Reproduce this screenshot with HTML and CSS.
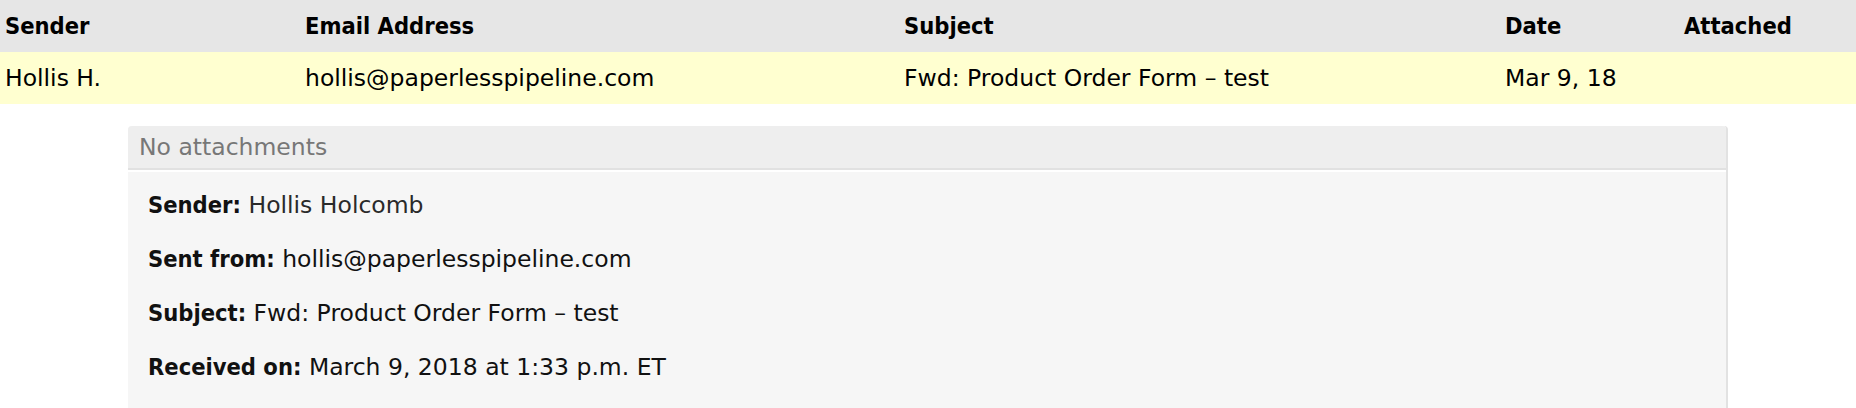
FILE: index.html
```html
<!DOCTYPE html>
<html lang="en">
<head>
<meta charset="utf-8">
<title>Email</title>
<link rel="stylesheet" href="styles.css">
</head>
<body>
<div class="mail-table">
  <div class="row head">
    <div class="cell">Sender</div>
    <div class="cell">Email Address</div>
    <div class="cell">Subject</div>
    <div class="cell">Date</div>
    <div class="cell">Attached</div>
  </div>
  <div class="row item">
    <div class="cell">Hollis H.</div>
    <div class="cell">hollis@paperlesspipeline.com</div>
    <div class="cell">Fwd: Product Order Form – test</div>
    <div class="cell">Mar 9, 18</div>
    <div class="cell"></div>
  </div>
</div>
<div class="detail">
  <div class="detail-head">No attachments</div>
  <div class="detail-body">
    <p><b>Sender:</b> <span class="val">Hollis Holcomb</span></p>
    <p><b>Sent from:</b> hollis@paperlesspipeline.com</p>
    <p><b>Subject:</b> Fwd: Product Order Form – test</p>
    <p><b>Received on:</b> March 9, 2018 at 1:33 p.m. ET</p>
  </div>
</div>
</body>
</html>
```
FILE: styles.css
```css
html, body {
  margin: 0;
  padding: 0;
  overflow: hidden;
  background: #ffffff;
}
body {
  font-family: "DejaVu Sans", "Liberation Sans", sans-serif;
  font-size: 23.5px;
  color: #000;
}
b, .head .cell {
  font-family: "DejaVu Sans Condensed", "DejaVu Sans", sans-serif;
  font-weight: bold;
}
.row {
  display: grid;
  grid-template-columns: 300px 599px 601px 179px 1fr;
  height: 52px;
  line-height: 52px;
}
.cell {
  padding-left: 5px;
  white-space: nowrap;
}
.head {
  background: #e6e6e6;
}
.item {
  background: #ffffd0;
}
.detail {
  margin: 22px 0 0 128px;
  width: 1598px;
  border-right: 2px solid #e2e2e2;
  border-radius: 4px 4px 0 0;
  background: #f6f6f6;
}
.detail-head {
  height: 42px;
  line-height: 42px;
  padding-left: 11px;
  color: #777;
  background: #eeeeee;
  border-bottom: 2px solid #e1e1e1;
  border-radius: 4px 4px 0 0;
}
.detail-body {
  border-top: 2px solid #ffffff;
  padding: 17px 20px 20px;
}
.detail-body p {
  margin: 0 0 22px;
  line-height: 32px;
  color: #111;
}
.detail-body .val {
  color: #2a2a2a;
}
```
